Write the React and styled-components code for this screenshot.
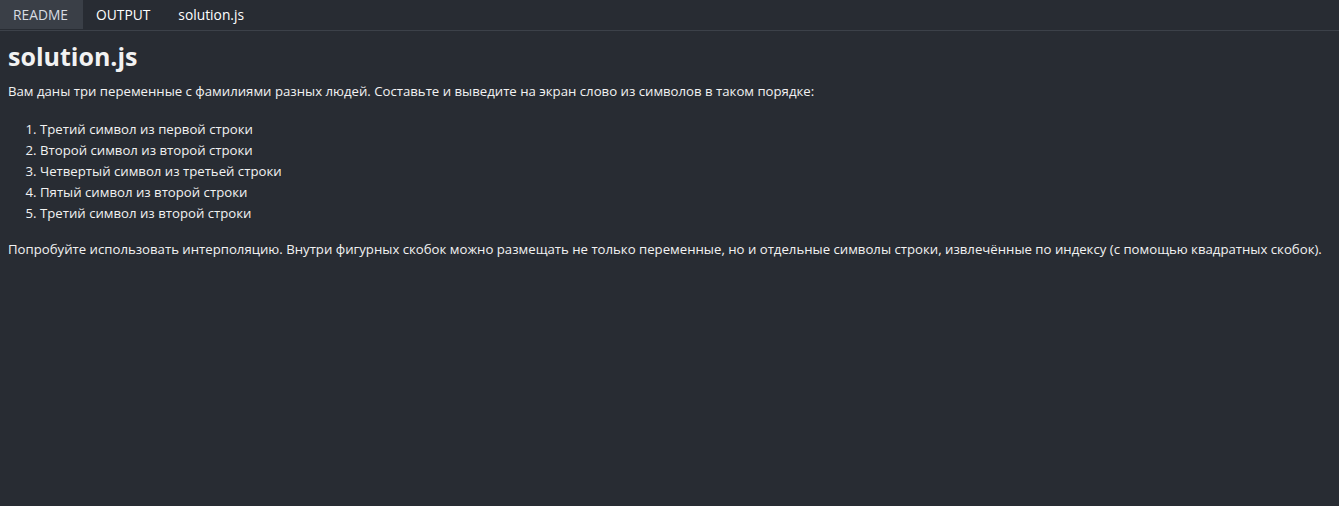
import styled, { createGlobalStyle } from "styled-components";

const GlobalStyle = createGlobalStyle`
  html, body {
    margin: 0;
    padding: 0;
    background: #282c33;
    height: 100%;
  }
  #root {
    min-height: 100vh;
  }
`;

const tabs = ["README", "OUTPUT", "solution.js"];

const steps = [
  "Третий символ из первой строки",
  "Второй символ из второй строки",
  "Четвертый символ из третьей строки",
  "Пятый символ из второй строки",
  "Третий символ из второй строки",
];

export default function App() {
  return (
    <Wrapper>
      <GlobalStyle />
      <TabBar>
        {tabs.map((t, i) => (
          <Tab key={t} active={i === 0}>
            {t}
          </Tab>
        ))}
      </TabBar>
      <Content>
        <Title>solution.js</Title>
        <Text>
          Вам даны три переменные с фамилиями разных людей. Составьте и выведите
          на экран слово из символов в таком порядке:
        </Text>
        <List>
          {steps.map((s) => (
            <Item key={s}>{s}</Item>
          ))}
        </List>
        <Text>
          Попробуйте использовать интерполяцию. Внутри фигурных скобок можно
          размещать не только переменные, но и отдельные символы строки,
          извлечённые по индексу (с помощью квадратных скобок).
        </Text>
      </Content>
    </Wrapper>
  );
}

const Wrapper = styled.div`
  min-height: 100vh;
  background: #282c33;
  color: #f2f2f2;
  font-family: "Open Sans", "Noto Sans", sans-serif;
  font-size: 13.2px;
`;

const TabBar = styled.div`
  display: flex;
  height: 30px;
  border-bottom: 1px solid #3c4149;
`;

const Tab = styled.div`
  display: flex;
  align-items: center;
  padding: 0 15px 0 13px;
  height: 29px;
  background: ${(p) => (p.active ? "#3a3f47" : "transparent")};
  color: ${(p) => (p.active ? "#d8dce2" : "#ffffff")};
  font-size: 13.8px;
`;

const Content = styled.div`
  padding: 0 8px;
`;

const Title = styled.h1`
  margin: 9px 0 8px;
  font-size: 25px;
  font-weight: 700;
  line-height: 33px;
`;

const Text = styled.p`
  margin: 0;
  line-height: 21px;
`;

const List = styled.ol`
  margin: 17px 0 15px;
  padding-left: 32px;
`;

const Item = styled.li`
  line-height: 21px;
`;
